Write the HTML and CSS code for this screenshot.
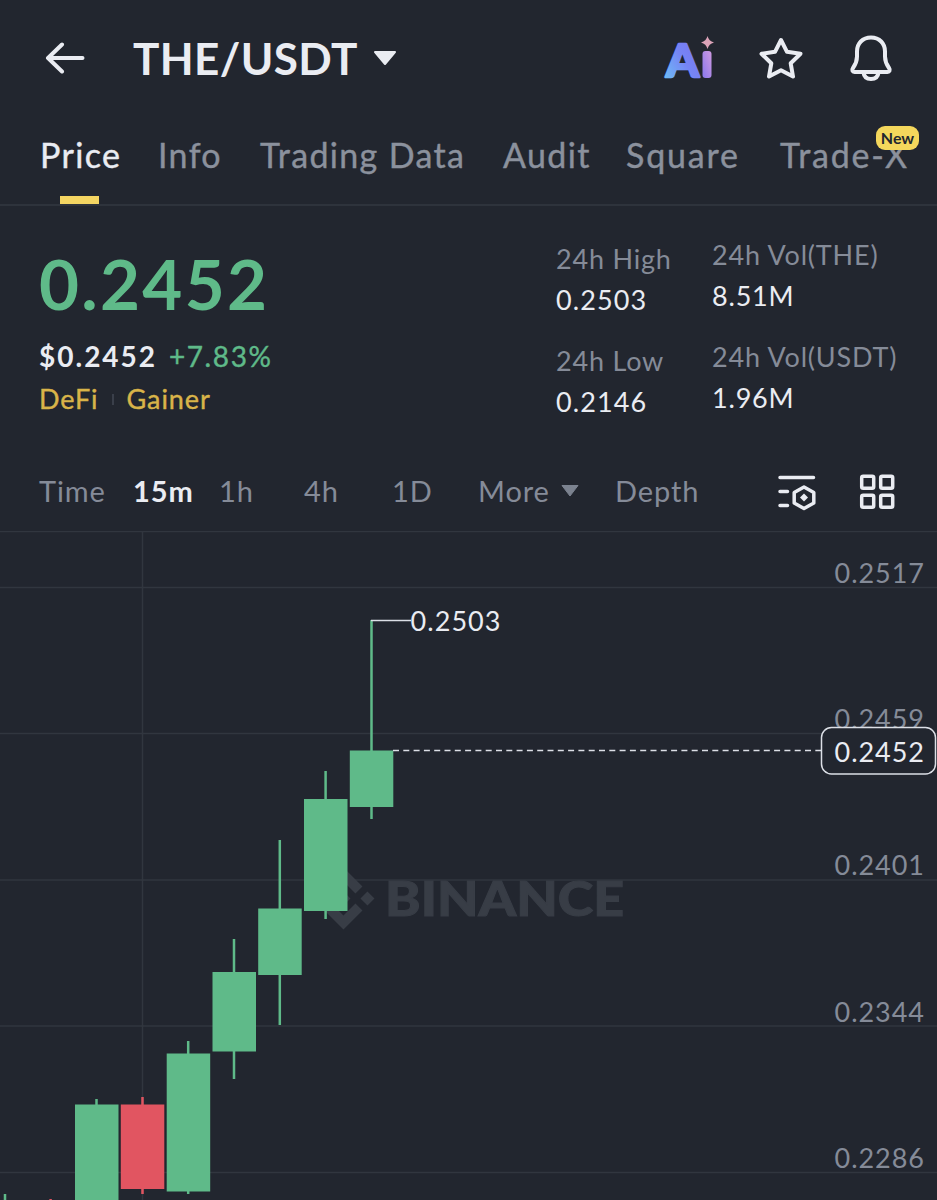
FILE: index.html
```
<!DOCTYPE html>
<html lang="en">

<head>
    <meta charset="UTF-8">
    <meta name="viewport" content="width=device-width, initial-scale=1.0">
    <title>THE/USDT</title>
    <link rel="stylesheet" href="styles.css">
</head>

<body>
    <header class="header">
        <svg class="back" width="40" height="32" viewBox="0 0 40 32">
            <path d="M17 2.500L3 16l14 13.500M3 16h34.500" />
        </svg>
        <h1 class="pair">THE/USDT</h1>
        <svg class="caret" width="24" height="16" viewBox="0 0 24 16">
            <path d="M2 2h20L12 14z" />
        </svg>
        <div class="header-icons">
            <svg class="ai" width="50" height="44" viewBox="0 0 50 44">
                <defs>
                    <linearGradient id="aiBlue" x1="0" y1="1" x2="1" y2="0">
                        <stop offset="0" stop-color="#6cc4f5" />
                        <stop offset="0.5" stop-color="#7685f5" />
                        <stop offset="1" stop-color="#7a70f0" />
                    </linearGradient>
                    <linearGradient id="aiPink" x1="0" y1="1" x2="1" y2="0">
                        <stop offset="0" stop-color="#8a78ee" />
                        <stop offset="1" stop-color="#cf9ae0" />
                    </linearGradient>
                </defs>
                <text class="ai-letter" x="2" y="40.500" textLength="33" lengthAdjust="spacingAndGlyphs">A</text>
                <rect x="38.500" y="15" width="9" height="27" rx="3" fill="url(#aiPink)" />
                <path d="M43.500 0q1.300 5.200 6.500 6.500q-5.200 1.300-6.500 6.500q-1.300-5.200-6.500-6.500q5.200-1.300 6.500-6.500z" fill="#dba3b8" />
            </svg>
            <svg class="line-icon star" width="46" height="44" viewBox="0 0 46 44">
                <path d="M23 4l6 11.800 13.500 2-9.800 9.500L35 40.500l-12-6.300-12 6.300 2.300-13.200-9.800-9.500 13.500-2z" />
            </svg>
            <svg class="line-icon" width="46" height="48" viewBox="0 0 46 48">
                <path d="M23 3.500c-8.500 0-14 6-14 14v5c0 5-1.500 8-4 11.500-1.500 2.200-.500 4 1.500 4h33c2 0 3-1.800 1.500-4-2.500-3.500-4-6.500-4-11.500v-5c0-8-5.500-14-14-14z" />
                <path d="M15.500 38.500c.500 4.500 3.500 6.500 7.500 6.500s7-2 7.500-6.500" />
            </svg>
        </div>
    </header>

    <nav class="tabs">
        <div class="tab active">Price</div>
        <div class="tab">Info</div>
        <div class="tab">Trading Data</div>
        <div class="tab">Audit</div>
        <div class="tab wide">Square</div>
        <div class="tab wide">Trade-X<span class="badge">New</span></div>
    </nav>

    <section class="summary">
        <div class="quote">
            <div class="last-price">0.2452</div>
            <div class="fiat">$0.2452 <span class="change">+7.83%</span></div>
            <div class="tags">
                <span>DeFi</span>
                <span class="divider"></span>
                <span>Gainer</span>
            </div>
        </div>
        <dl class="stats">
            <div>
                <dt>24h High</dt>
                <dd>0.2503</dd>
            </div>
            <div>
                <dt>24h Low</dt>
                <dd>0.2146</dd>
            </div>
        </dl>
        <dl class="stats volume">
            <div>
                <dt>24h Vol(THE)</dt>
                <dd>8.51M</dd>
            </div>
            <div>
                <dt>24h Vol(USDT)</dt>
                <dd>1.96M</dd>
            </div>
        </dl>
    </section>

    <div class="periods">
        <span>Time</span>
        <span class="selected">15m</span>
        <span>1h</span>
        <span>4h</span>
        <span>1D</span>
        <span class="more">More
            <svg width="20" height="14" viewBox="0 0 20 14">
                <path d="M2 1.500h16L10 12z" />
            </svg>
        </span>
        <span>Depth</span>
        <svg class="tool" width="40" height="38" viewBox="0 0 40 38">
            <path d="M3 4.500h33.500M3 18.500h7.500M3 32.500h7.500" />
            <path d="M27 14l9.800 5.500v10.500L27 35.500 17.200 30V19.500z" />
            <path class="solid" d="M27 20.500l4 4-4 4-4-4z" />
        </svg>
        <svg class="tool" width="38" height="38" viewBox="0 0 38 38">
            <rect x="3.700" y="3.200" width="12" height="12" rx="1.500" />
            <rect x="22.700" y="3.200" width="12" height="12" rx="1.500" />
            <rect x="3.700" y="22.200" width="12" height="12" rx="1.500" />
            <rect x="22.700" y="22.200" width="12" height="12" rx="1.500" />
        </svg>
    </div>

    <svg class="chart" width="937" height="669" viewBox="0 531 937 669">
        <g class="grid">
            <path d="M0 531.500h937M0 587.500h937M0 733.500h937M0 880h937M0 1026h937M0 1172.500h937M142.500 531v669" />
        </g>

        <g class="watermark">
            <path transform="translate(312.500 867.500) scale(2.583)" d="M16.624 13.920l2.717 2.716-7.353 7.353-7.353-7.352 2.718-2.717 4.635 4.660 4.636-4.660zM21.260 9.284L24 12l-2.715 2.716L18.568 12zM11.988 9.285l2.717 2.691-2.717 2.717L9.272 12zM2.716 9.284L5.409 12l-2.692 2.692L0 12zM11.988.012l7.353 7.329-2.717 2.715-4.636-4.636-4.635 4.660-2.718-2.716z" />
            <text x="385" y="915.500" textLength="239" lengthAdjust="spacingAndGlyphs">BINANCE</text>
        </g>

        <g class="up">
            <path d="M5 1194v6M96.500 1099v10M188.200 1041v153M234 939v140M279.800 840v185M325.600 771v148M371.500 620v199" />
            <rect x="75" y="1104.500" width="43.500" height="96" />
            <rect x="166.700" y="1053.500" width="43.500" height="138" />
            <rect x="212.500" y="972" width="43.500" height="79.500" />
            <rect x="258.200" y="908.500" width="43.500" height="66.500" />
            <rect x="304" y="799" width="43.500" height="112" />
            <rect x="349.800" y="750.500" width="43.500" height="56.500" />
        </g>
        <g class="down">
            <path d="M50.600 1199v1M142.500 1097v97" />
            <rect x="120.800" y="1104.500" width="43.500" height="84.500" />
        </g>

        <path class="high-line" d="M371 620.500h40" />
        <text class="value" x="410.500" y="631" textLength="90">0.2503</text>

        <g class="axis">
            <text x="834.500" y="582.500" textLength="89.500">0.2517</text>
            <text x="834.500" y="729" textLength="89.500">0.2459</text>
            <text x="834.500" y="875" textLength="89.500">0.2401</text>
            <text x="834.500" y="1022" textLength="89.500">0.2344</text>
            <text x="834.500" y="1167.500" textLength="89.500">0.2286</text>
        </g>

        <path class="price-line" d="M393 750.500h428" />
        <rect class="price-box" x="821.500" y="727.500" width="114" height="46.500" rx="10" />
        <text class="value" x="834.500" y="761.500" textLength="89.500">0.2452</text>
    </svg>
</body>

</html>
```

FILE: styles.css
```
* {
    box-sizing: border-box;
}

body {
    margin: 0;
    width: 937px;
    height: 1200px;
    overflow: hidden;
    background-color: #22262f;
    color: #eaecf2;
    font-family: Lato, "Liberation Sans", sans-serif;
}

.header {
    display: flex;
    align-items: center;
    height: 116px;
    padding: 0 43px 0 45px;
}

.back {
    fill: none;
    stroke: #eaecf2;
    stroke-width: 4;
    stroke-linecap: round;
    stroke-linejoin: round;
}

.pair {
    margin: 0 0 0 48px;
    width: 225px;
    font-size: 44px;
    line-height: 60px;
    letter-spacing: 0.4px;
}

.caret {
    margin-left: 15px;
    fill: #eaecf2;
    stroke: #eaecf2;
    stroke-width: 2;
    stroke-linejoin: round;
}

.header-icons {
    display: flex;
    align-items: center;
    margin-left: auto;
}

.ai {
    overflow: visible;
}

.ai-letter {
    font-size: 46px;
    font-weight: 900;
    fill: url(#aiBlue);
    stroke: url(#aiBlue);
    stroke-width: 2.5;
    stroke-linejoin: round;
}

.line-icon {
    margin-left: 44px;
    fill: none;
    stroke: #eaecf2;
    stroke-width: 4;
    stroke-linejoin: round;
    stroke-linecap: round;
}

.tabs {
    display: grid;
    grid-template-columns: 118px 102px 243px 123px 154px 1fr;
    height: 90px;
    padding-left: 40px;
    border-bottom: 2px solid #2e333c;
    color: #8b919d;
    font-size: 34px;
    line-height: 78px;
    letter-spacing: 1.35px;
    white-space: nowrap;
    -webkit-text-stroke: 0.4px;
}

.tab {
    position: relative;
}

.tab.wide {
    letter-spacing: 1.8px;
}

.tab.active {
    color: #eaecf2;
}

.tab.active::after {
    content: "";
    position: absolute;
    left: 20px;
    bottom: 0;
    width: 39px;
    height: 8px;
    background-color: #f4d562;
}

.badge {
    position: absolute;
    left: 96px;
    top: 10px;
    width: 43px;
    height: 24px;
    border-radius: 9px;
    background-color: #f4d75c;
    color: #22262f;
    font-size: 16px;
    font-weight: bold;
    line-height: 24px;
    letter-spacing: 0;
    text-align: center;
    -webkit-text-stroke: 0;
}

.summary {
    display: grid;
    grid-template-columns: 517px 156px 1fr;
    height: 247px;
    padding-left: 39px;
}

.quote {
    padding-top: 38px;
}

.last-price {
    color: #5fba89;
    font-size: 69px;
    font-weight: bold;
    line-height: 80px;
    letter-spacing: 2.3px;
}

.fiat {
    margin-top: 12px;
    font-size: 28px;
    font-weight: bold;
    line-height: 40px;
    letter-spacing: 2px;
}

.change {
    margin-left: 3px;
    color: #5fba89;
    font-weight: normal;
    letter-spacing: 1.6px;
    -webkit-text-stroke: 0.4px;
}

.tags {
    display: flex;
    align-items: center;
    gap: 13px;
    margin-top: 3px;
    color: #d9b449;
    font-size: 27px;
    line-height: 40px;
    letter-spacing: 0.9px;
    -webkit-text-stroke: 0.4px;
}

.divider {
    width: 2px;
    height: 11px;
    background-color: #3a3f4a;
}

.stats {
    display: flex;
    flex-direction: column;
    gap: 22px;
    margin: 0;
    padding-top: 33px;
    font-size: 27px;
    line-height: 40px;
    white-space: nowrap;
}

.stats dt {
    color: #858b98;
    letter-spacing: 0.8px;
}

.stats dd {
    margin: 0;
    position: relative;
    top: 1px;
    letter-spacing: 1.1px;
}

.volume {
    padding-top: 29px;
}

.volume dd {
    letter-spacing: 0.8px;
}

.periods {
    display: grid;
    grid-template-columns: 94px 86px 85px 88px 86px 137px 162px 81px 1fr;
    align-items: center;
    height: 78px;
    padding-left: 39px;
    color: #858b98;
    font-size: 29px;
    line-height: 40px;
    letter-spacing: 0.9px;
    white-space: nowrap;
}

.periods span {
    margin-top: -2px;
}

.selected {
    color: #eaecf2;
    font-weight: bold;
}

.more {
    display: flex;
    align-items: center;
    gap: 10px;
}

.more svg {
    fill: #7b828f;
    stroke: #7b828f;
    stroke-linejoin: round;
}

.tool {
    fill: none;
    stroke: #eaecf2;
    stroke-width: 3.5;
    stroke-linecap: round;
    stroke-linejoin: round;
}

.tool .solid {
    fill: #eaecf2;
    stroke: none;
}

.chart {
    display: block;
    font-size: 27px;
}

.grid path {
    fill: none;
    stroke: #31363f;
    stroke-width: 1.5;
}

.watermark {
    fill: #383d46;
    font-size: 48px;
    font-weight: 900;
}

.watermark text {
    stroke: #383d46;
    stroke-width: 1;
}

.up {
    fill: #5fba89;
}

.down {
    fill: #e15561;
}

.up path {
    stroke: #5fba89;
    stroke-width: 2.5;
}

.down path {
    stroke: #e15561;
    stroke-width: 2.5;
}

.axis {
    fill: #858b98;
}

.value {
    fill: #eaecf2;
}

.high-line {
    stroke: #dcdfe6;
    stroke-width: 1.5;
}

.price-line {
    stroke: #dcdfe6;
    stroke-width: 1.5;
    stroke-dasharray: 6 4.3;
}

.price-box {
    fill: #22262f;
    stroke: #dcdfe6;
    stroke-width: 1.5;
}
```
